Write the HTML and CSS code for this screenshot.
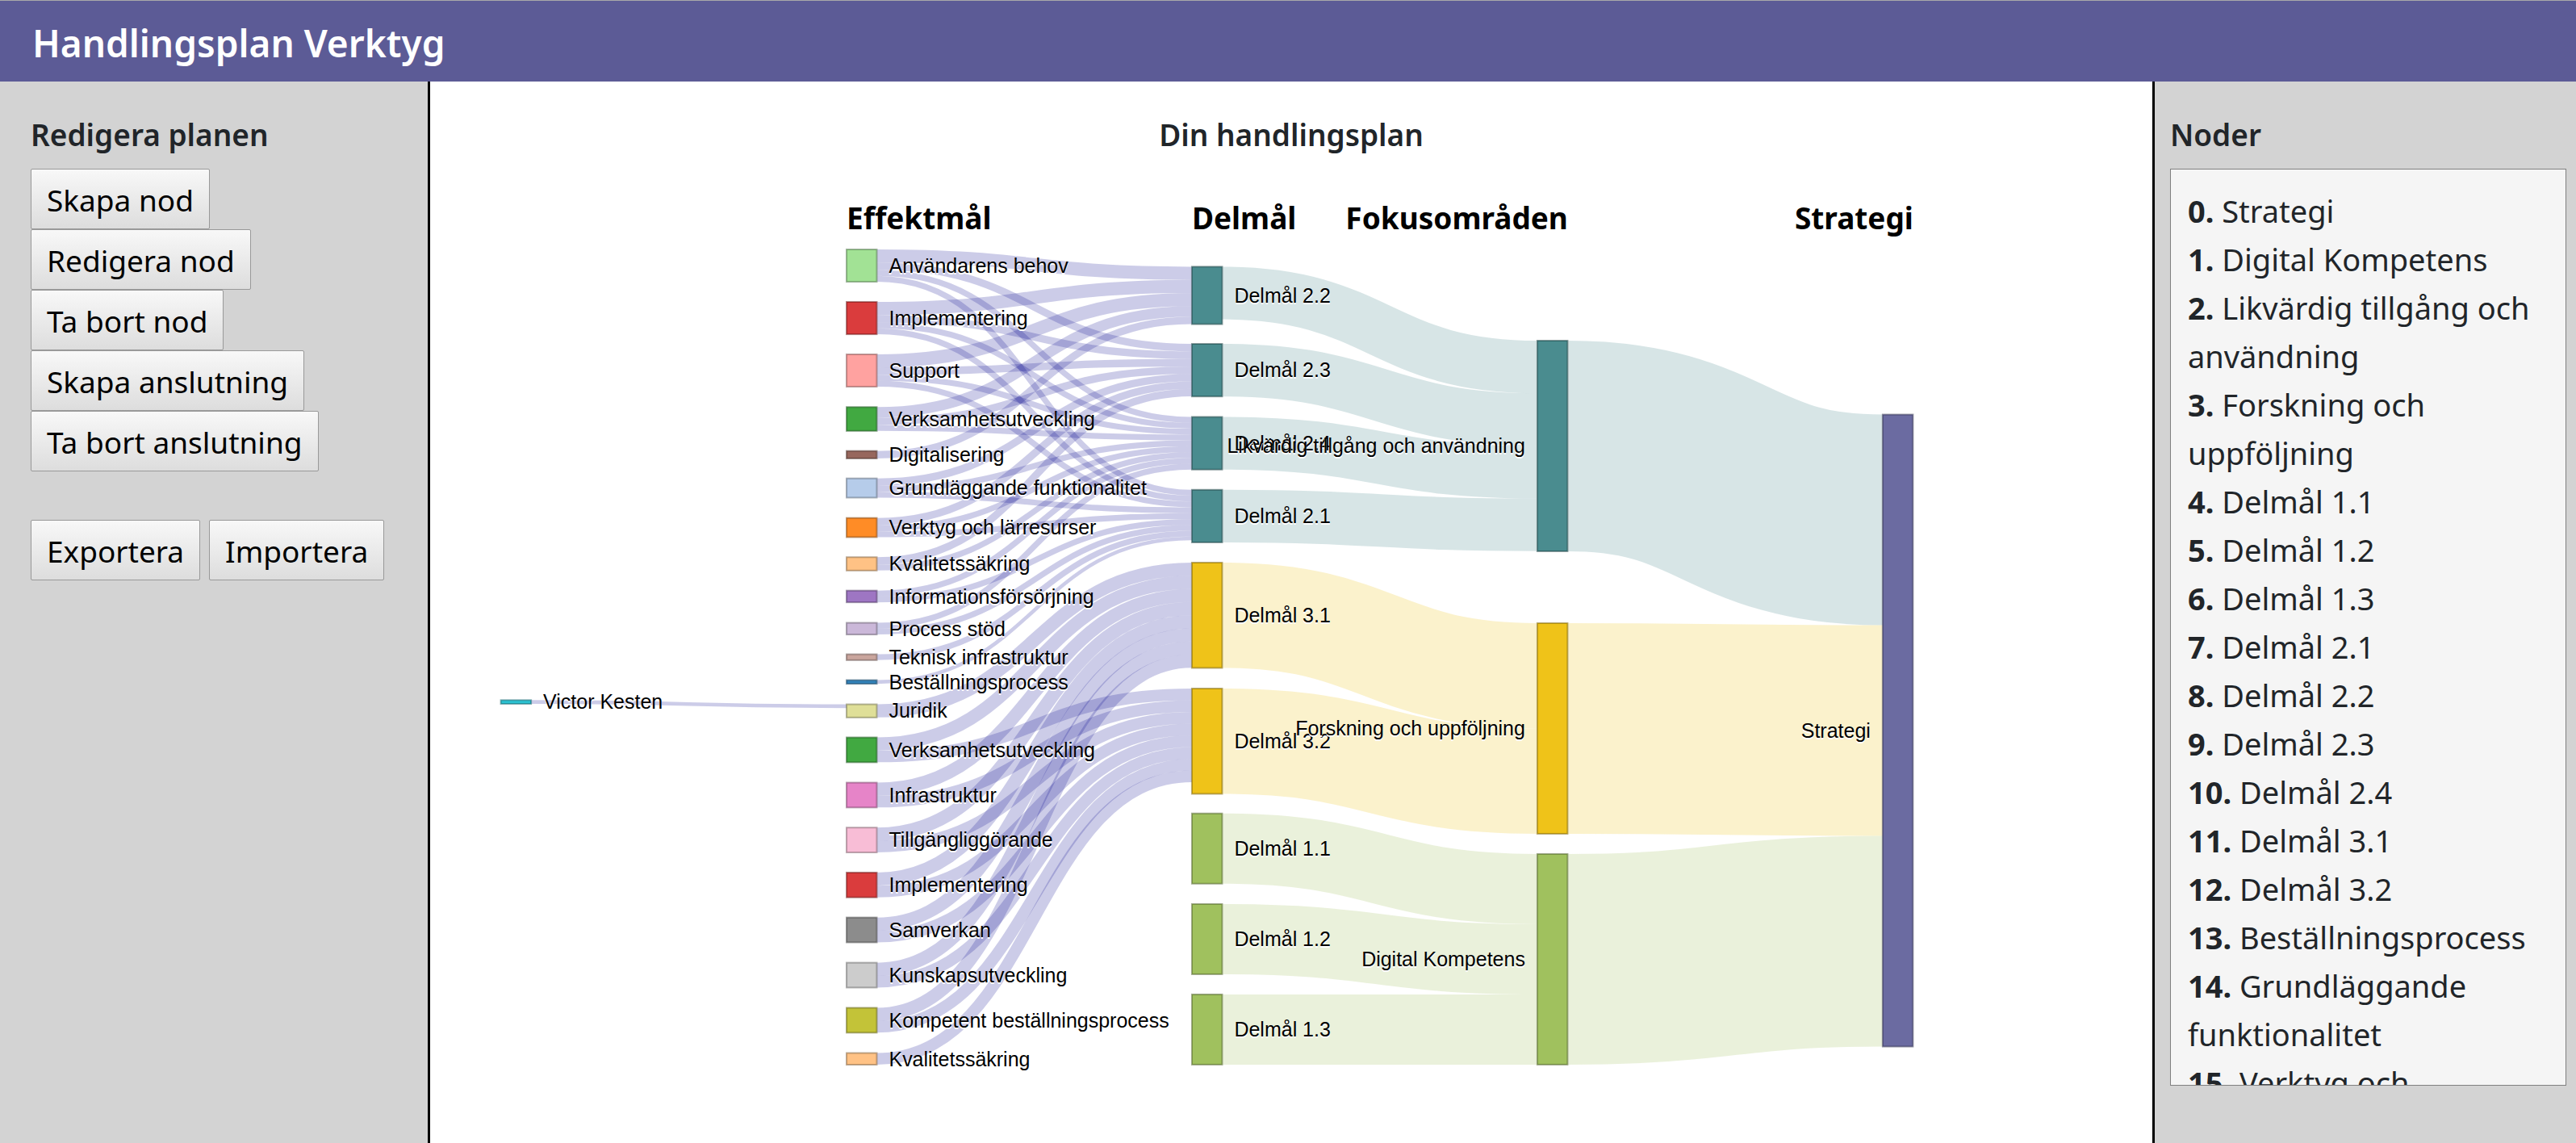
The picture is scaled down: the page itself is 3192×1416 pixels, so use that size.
FILE: index.html
```html
<!DOCTYPE html>
<html lang="sv">
<head>
  <meta charset="utf-8">
  <meta name="viewport" content="width=device-width, initial-scale=1">
  <title>Handlingsplan Verktyg</title>
  <link rel="stylesheet" href="styles.css">
</head>
<body>
  <header class="topbar">
    <h1 class="topbar-title">Handlingsplan Verktyg</h1>
  </header>
  <div class="layout">
    <aside class="panel panel-edit">
      <h2 class="heading">Redigera planen</h2>
      <div class="actions">
        <button type="button" class="btn">Skapa nod</button>
        <button type="button" class="btn">Redigera nod</button>
        <button type="button" class="btn">Ta bort nod</button>
        <button type="button" class="btn">Skapa anslutning</button>
        <button type="button" class="btn">Ta bort anslutning</button>
      </div>
      <div class="files">
        <button type="button" class="btn">Exportera</button>
        <button type="button" class="btn">Importera</button>
      </div>
    </aside>
    <main class="plan">
      <h2 class="heading plan-heading">Din handlingsplan</h2>
      <svg class="sankey" id="sankey" viewBox="533 209 2134 1140" role="img" aria-label="Din handlingsplan"></svg>
    </main>
    <aside class="panel panel-nodes">
      <h2 class="heading">Noder</h2>
      <ul class="node-list">
        <li><b>0.</b> Strategi</li>
        <li><b>1.</b> Digital Kompetens</li>
        <li><b>2.</b> Likvärdig tillgång och användning</li>
        <li><b>3.</b> Forskning och uppföljning</li>
        <li><b>4.</b> Delmål 1.1</li>
        <li><b>5.</b> Delmål 1.2</li>
        <li><b>6.</b> Delmål 1.3</li>
        <li><b>7.</b> Delmål 2.1</li>
        <li><b>8.</b> Delmål 2.2</li>
        <li><b>9.</b> Delmål 2.3</li>
        <li><b>10.</b> Delmål 2.4</li>
        <li><b>11.</b> Delmål 3.1</li>
        <li><b>12.</b> Delmål 3.2</li>
        <li><b>13.</b> Beställningsprocess</li>
        <li><b>14.</b> Grundläggande funktionalitet</li>
        <li><b>15.</b> Verktyg och lärresurser</li>
      </ul>
    </aside>
  </div>
  <script src="sankey.js"></script>
</body>
</html>
```
FILE: styles.css
```css
*,
*::before,
*::after {
  box-sizing: border-box;
}

body {
  display: flex;
  flex-direction: column;
  height: 100vh;
  margin: 0;
  background: #fff;
  color: #212529;
  font-family: "Noto Sans", "Open Sans", sans-serif;
  font-size: 38px;
  line-height: 60px;
}

.topbar {
  flex: none;
  padding: 20px 40px 16px;
  border-top: 1px solid #a9a9a9;
  background: #5c5b96;
  color: #fff;
}

.topbar-title {
  margin: 0;
  font-size: 46px;
  font-weight: 600;
  line-height: 64px;
}

.layout {
  display: grid;
  flex: 1;
  grid-template-columns: 16.7% 1fr 16.45%;
  min-height: 0;
}

.panel {
  display: flex;
  flex-direction: column;
  min-height: 0;
  background: #d3d3d3;
}

.panel-edit {
  padding: 36px 38px;
  border-right: 3px solid #000;
}

.panel-nodes {
  padding: 36px 12px 71px 19px;
  border-left: 3px solid #000;
}

.heading {
  margin: 0 0 12px;
  font-size: 37px;
  font-weight: 600;
  line-height: 60px;
}

.actions {
  display: flex;
  flex-direction: column;
  align-items: flex-start;
}

.files {
  display: flex;
  gap: 11px;
  margin-top: 60px;
}

.btn {
  height: 75px;
  padding: 2px 19px 0;
  border: 1px solid #999;
  border-radius: 2px;
  background: linear-gradient(#f8f8f8, #dddddd);
  color: #000;
  font: inherit;
  font-size: 37px;
  white-space: nowrap;
}

.plan {
  min-width: 0;
  padding-top: 36px;
}

.plan-heading {
  text-align: center;
}

.sankey {
  display: block;
  width: 100%;
  overflow: visible;
}

.node-list {
  flex: 1;
  min-height: 0;
  margin: 0;
  padding: 21px;
  overflow: hidden;
  border: 1px solid #808080;
  background: #f5f5f5;
  list-style: none;
}

.link {
  fill: none;
  stroke-opacity: 0.2;
}

.node {
  fill-opacity: 0.9;
  stroke-opacity: 0.5;
  stroke-width: 2;
}

.label {
  fill: #000;
  font-family: "Liberation Sans", Arial, sans-serif;
  font-size: 25px;
  text-shadow: 0 2px 0 #fff;
}

.column-title {
  fill: #000;
  font-size: 37px;
  font-weight: 700;
}
```
FILE: sankey.js
```js
const NS = "http://www.w3.org/2000/svg";
const NODE_WIDTH = 37.5;
const COLUMNS = [620.6, 1049, 1477, 1905, 2333];
const TEAL = "#367f83", YELLOW = "#edbc00", GREEN = "#96ba4d", BLUE = "#00008b";

// id: [name, column, top, color]
const nodes = {
  victor: ["Victor Kesten", 0, 867.4, "#17becf"],
  anv: ["Användarens behov", 1, 309, "#98df8a"],
  imp: ["Implementering", 1, 374, "#d62728"],
  sup: ["Support", 1, 439, "#ff9896"],
  ver: ["Verksamhetsutveckling", 1, 504.3, "#2ca02c"],
  dig: ["Digitalisering", 1, 558.7, "#8c564b"],
  gru: ["Grundläggande funktionalitet", 1, 592.7, "#aec7e8"],
  vkt: ["Verktyg och lärresurser", 1, 641.7, "#ff7f0e"],
  kva: ["Kvalitetssäkring", 1, 690.3, "#ffbb78"],
  inf: ["Informationsförsörjning", 1, 731.7, "#9467bd"],
  pro: ["Process stöd", 1, 771.6, "#c5b0d5"],
  tek: ["Teknisk infrastruktur", 1, 810.6, "#c49c94"],
  bes: ["Beställningsprocess", 1, 842.6, "#1f77b4"],
  jur: ["Juridik", 1, 872.6, "#dbdb8d"],
  ver2: ["Verksamhetsutveckling", 1, 913.6, "#2ca02c"],
  ifr: ["Infrastruktur", 1, 969.6, "#e377c2"],
  til: ["Tillgängliggörande", 1, 1025.3, "#f7b6d2"],
  imp2: ["Implementering", 1, 1081, "#d62728"],
  sam: ["Samverkan", 1, 1136.7, "#7f7f7f"],
  kun: ["Kunskapsutveckling", 1, 1192.7, "#c7c7c7"],
  kom: ["Kompetent beställningsprocess", 1, 1248.6, "#bcbd22"],
  kva2: ["Kvalitetssäkring", 1, 1304.6, "#ffbb78"],
  d22: ["Delmål 2.2", 2, 330.4, TEAL],
  d23: ["Delmål 2.3", 2, 426, TEAL],
  d24: ["Delmål 2.4", 2, 516.5, TEAL],
  d21: ["Delmål 2.1", 2, 606.8, TEAL],
  d31: ["Delmål 3.1", 2, 697, YELLOW],
  d32: ["Delmål 3.2", 2, 853, YELLOW],
  d11: ["Delmål 1.1", 2, 1007.8, GREEN],
  d12: ["Delmål 1.2", 2, 1120, GREEN],
  d13: ["Delmål 1.3", 2, 1232, GREEN],
  lik: ["Likvärdig tillgång och användning", 3, 422, TEAL],
  fors: ["Forskning och uppföljning", 3, 772, YELLOW],
  komp: ["Digital Kompetens", 3, 1058, GREEN],
  str: ["Strategi", 4, 513.6, "#5b5b97"]
};

// [source, target, value, color], in stacking order at both ends
const links = [
  ["victor", "jur", 4.6, BLUE],
  ["anv", "d22", 16.3, BLUE],
  ["imp", "d22", 16.3, BLUE],
  ["sup", "d22", 16.3, BLUE],
  ["ver", "d22", 13, BLUE],
  ["dig", "d22", 9.3, BLUE],
  ...["anv", "imp", "sup", "ver", "gru", "vkt", "kva"].map(s => [s, "d23", 9.3, BLUE]),
  ...["anv", "imp", "sup", "ver", "gru", "vkt", "kva", "inf", "pro"].map(s => [s, "d24", 7.25, BLUE]),
  ...["anv", "imp", "sup", "gru", "vkt", "inf", "pro", "tek"].map(s => [s, "d21", 7.25, BLUE]),
  ["bes", "d21", 4.6, BLUE],
  ...["jur", "ver2", "ifr", "til", "imp2", "sam", "kun", "kom"].map(s => [s, "d31", 16.3, BLUE]),
  ...["ver2", "ifr", "til", "imp2", "sam", "kun", "kom", "kva2"].map(s => [s, "d32", 14.5, BLUE]),
  ...["d22", "d23", "d24", "d21"].map(s => [s, "lik", 65.2, TEAL]),
  ...["d31", "d32"].map(s => [s, "fors", 130.5, YELLOW]),
  ...["d11", "d12", "d13"].map(s => [s, "komp", 87, GREEN]),
  ["lik", "str", 261, TEAL],
  ["fors", "str", 261, YELLOW],
  ["komp", "str", 261, GREEN]
];

const columnTitles = [
  ["Effektmål", 1049, "start"],
  ["Delmål", 1477, "start"],
  ["Fokusområden", 1943, "end"],
  ["Strategi", 2371, "end"]
];

const svg = document.getElementById("sankey");

function add(tag, attrs, text) {
  const el = document.createElementNS(NS, tag);
  for (const key in attrs) el.setAttribute(key, attrs[key]);
  if (text) el.textContent = text;
  svg.appendChild(el);
}

function darker(hex) {
  const part = i => Math.floor(parseInt(hex.slice(i, i + 2), 16) * 0.49);
  return `rgb(${part(1)}, ${part(3)}, ${part(5)})`;
}

const used = {};
for (const id in nodes) used[id] = { out: 0, in: 0 };

for (const [source, target, value, color] of links) {
  const s = nodes[source], t = nodes[target];
  const x0 = COLUMNS[s[1]] + NODE_WIDTH, x1 = COLUMNS[t[1]], mid = (x0 + x1) / 2;
  const y0 = s[2] + used[source].out + value / 2;
  const y1 = t[2] + used[target].in + value / 2;
  used[source].out += value;
  used[target].in += value;
  add("path", {
    class: "link", stroke: color, "stroke-width": value,
    d: `M${x0},${y0}C${mid},${y0} ${mid},${y1} ${x1},${y1}`
  });
}

for (const id in nodes) {
  const [name, column, top, color] = nodes[id];
  const x = COLUMNS[column], height = Math.max(used[id].out, used[id].in);
  add("rect", { class: "node", x, y: top, width: NODE_WIDTH, height, fill: color, stroke: darker(color) });
  const left = column > 2;
  add("text", {
    class: "label",
    x: left ? x - 15 : x + NODE_WIDTH + 15,
    y: top + height / 2, dy: ".35em",
    "text-anchor": left ? "end" : "start"
  }, name);
}

for (const [title, x, anchor] of columnTitles) {
  add("text", { class: "column-title", x, y: 284, "text-anchor": anchor }, title);
}
```
